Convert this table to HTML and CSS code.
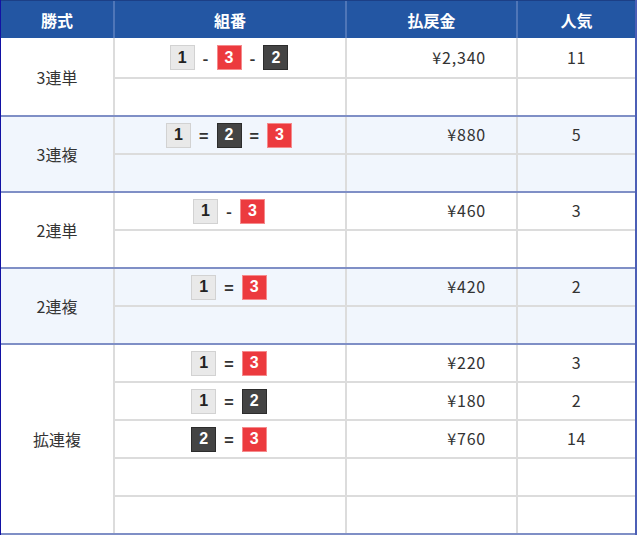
FILE: index.html
```html
<!DOCTYPE html>
<html lang="ja">
<head>
<meta charset="utf-8">
<title>払戻金</title>
<link rel="stylesheet" href="styles.css">
</head>
<body>
<div class="payout">
  <div class="head">
    <div class="hcell">勝式</div>
    <div class="hcell">組番</div>
    <div class="hcell">払戻金</div>
    <div class="hcell last">人気</div>
  </div>

  <div class="group">
    <div class="label">3連単</div>
    <div class="rows">
      <div class="row tall">
        <div class="cell combo"><span class="bx w">1</span><span class="sep">-</span><span class="bx r">3</span><span class="sep">-</span><span class="bx k">2</span></div>
        <div class="cell yen">¥2,340</div>
        <div class="cell pop">11</div>
      </div>
      <div class="row"><div class="cell"></div><div class="cell"></div><div class="cell pop"></div></div>
    </div>
  </div>

  <div class="group alt">
    <div class="label">3連複</div>
    <div class="rows">
      <div class="row">
        <div class="cell combo"><span class="bx w">1</span><span class="sep">=</span><span class="bx k">2</span><span class="sep">=</span><span class="bx r">3</span></div>
        <div class="cell yen">¥880</div>
        <div class="cell pop">5</div>
      </div>
      <div class="row"><div class="cell"></div><div class="cell"></div><div class="cell pop"></div></div>
    </div>
  </div>

  <div class="group">
    <div class="label">2連単</div>
    <div class="rows">
      <div class="row">
        <div class="cell combo"><span class="bx w">1</span><span class="sep">-</span><span class="bx r">3</span></div>
        <div class="cell yen">¥460</div>
        <div class="cell pop">3</div>
      </div>
      <div class="row"><div class="cell"></div><div class="cell"></div><div class="cell pop"></div></div>
    </div>
  </div>

  <div class="group alt">
    <div class="label">2連複</div>
    <div class="rows">
      <div class="row">
        <div class="cell combo"><span class="bx w">1</span><span class="sep">=</span><span class="bx r">3</span></div>
        <div class="cell yen">¥420</div>
        <div class="cell pop">2</div>
      </div>
      <div class="row"><div class="cell"></div><div class="cell"></div><div class="cell pop"></div></div>
    </div>
  </div>

  <div class="group">
    <div class="label">拡連複</div>
    <div class="rows">
      <div class="row">
        <div class="cell combo"><span class="bx w">1</span><span class="sep">=</span><span class="bx r">3</span></div>
        <div class="cell yen">¥220</div>
        <div class="cell pop">3</div>
      </div>
      <div class="row">
        <div class="cell combo"><span class="bx w">1</span><span class="sep">=</span><span class="bx k">2</span></div>
        <div class="cell yen">¥180</div>
        <div class="cell pop">2</div>
      </div>
      <div class="row">
        <div class="cell combo"><span class="bx k">2</span><span class="sep">=</span><span class="bx r">3</span></div>
        <div class="cell yen">¥760</div>
        <div class="cell pop">14</div>
      </div>
      <div class="row"><div class="cell"></div><div class="cell"></div><div class="cell pop"></div></div>
      <div class="row"><div class="cell"></div><div class="cell"></div><div class="cell pop"></div></div>
    </div>
  </div>
</div>
</body>
</html>
```

FILE: styles.css
```css
* { box-sizing: border-box; }
html, body { margin: 0; padding: 0; background: #fff; }
body {
  font-family: "Noto Sans CJK JP", "Noto Sans", sans-serif;
  font-size: 16px;
  color: #333;
}
.payout {
  width: 637px;
  border-left: 1px solid #1212a4;
  border-right: 2px solid #4c5fb6;
}
.head {
  display: grid;
  grid-template-columns: 114px 232px 171px 1fr;
  height: 38px;
  background: #2356a3;
  border-top: 1px solid #1c3f86;
}
.hcell {
  display: flex;
  align-items: center;
  justify-content: center;
  color: #fff;
  font-weight: bold;
  font-size: 16px;
  border-right: 2px solid #4f76b8;
}
.hcell.last { border-right: 0; }
.group {
  display: grid;
  grid-template-columns: 114px 1fr;
  border-bottom: 2px solid #7f8fc6;
  background: #fff;
}
.group.alt { background: #f1f6fd; }
.label {
  display: flex;
  align-items: center;
  justify-content: center;
  border-right: 2px solid #dcdcdc;
  font-size: 16px;
}
.rows { display: flex; flex-direction: column; }
.row {
  display: grid;
  grid-template-columns: 232px 171px 1fr;
  height: 38px;
  border-bottom: 2px solid #dcdcdc;
}
.row.tall { height: 41px; }
.row:last-child { height: 36px; border-bottom: 0; }
.cell {
  display: flex;
  align-items: center;
  padding-bottom: 2px;
  border-right: 2px solid #dcdcdc;
}
.cell.pop { border-right: 0; justify-content: center; letter-spacing: 0.6px; }
.cell.yen { justify-content: flex-end; padding-right: 30px; letter-spacing: 0.8px; }
.cell.combo { justify-content: center; padding-right: 2px; padding-bottom: 0; }
.bx {
  display: inline-flex;
  align-items: center;
  justify-content: center;
  width: 25px;
  height: 25px;
  font-family: "Liberation Sans", Arial, sans-serif;
  font-weight: bold;
  font-size: 16px;
  border: 1px solid;
}
.bx.w { background: #e9e9e9; border-color: #d2d2d2; color: #222; }
.bx.r { background: #ec3a3e; border-color: #f58a8c; color: #fff; }
.bx.k { background: #444; border-color: #2c2c2c; color: #fff; }
.sep {
  margin: 0 8px;
  font-weight: bold;
  font-size: 16px;
  color: #333;
}
```
